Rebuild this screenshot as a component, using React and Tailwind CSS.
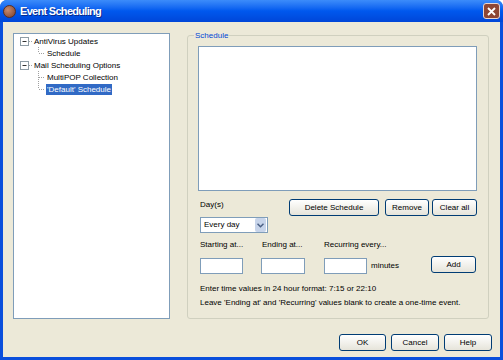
import React from 'react';

const font = { fontFamily: '"Liberation Sans", Arial, sans-serif' };

function XpButton({ children, className = '' }) {
    return (
        <div className={`flex items-center justify-center rounded-[3px] border border-[#003C74] bg-gradient-to-b from-white to-[#E6E4DA] text-black ${className}`}>
            {children}
        </div>
    );
}

function Connector({ type }) {
    // type: 'box' (expanded parent), 'mid' (├), 'end' (└)
    if (type === 'box') {
        return (
            <svg width="19" height="12" className="shrink-0">
                <rect x="6.5" y="2.5" width="8" height="8" fill="white" stroke="#8F9DA6" />
                <line x1="8.5" y1="6.5" x2="12.5" y2="6.5" stroke="#333" />
                <line x1="15" y1="6.5" x2="19" y2="6.5" stroke="#A0A0A0" strokeDasharray="1 1" />
            </svg>
        );
    }
    return (
        <svg width="32" height="12" className="shrink-0">
            <line x1="24.5" y1="0" x2="24.5" y2={type === 'end' ? 6 : 12} stroke="#A0A0A0" strokeDasharray="1 1" />
            <line x1="25" y1="6.5" x2="31" y2="6.5" stroke="#A0A0A0" strokeDasharray="1 1" />
        </svg>
    );
}

function TreeRow({ type, label, selected }) {
    return (
        <div className="flex h-[12px] items-center">
            <Connector type={type} />
            <span className={`px-[1px] leading-[11px] ${selected ? 'bg-[#316AC5] text-white' : 'text-black'}`}>{label}</span>
        </div>
    );
}

function TextBox({ className = '' }) {
    return <div className={`h-[16px] border border-[#7F9DB9] bg-white ${className}`} />;
}

export default function App() {
    return (
        <div className="flex h-[360px] w-[503px] flex-col overflow-hidden rounded-t-[7px] bg-[#0A4FDC] text-[8px]" style={font}>
            {/* Title bar */}
            <div className="flex h-[22px] shrink-0 items-center bg-gradient-to-b from-[#3C8CFA] via-[#0058EE] to-[#0046D8] pl-[3px] pr-[3px]">
                <div className="h-[13px] w-[13px] rounded-full border border-[#5A2E22] bg-[radial-gradient(circle_at_35%_35%,#C98B6E,#7A3F2C)]" />
                <span className="ml-[4px] text-[11px] font-bold tracking-[-0.7px] text-white [text-shadow:1px_1px_0_#0A2B8C]">Event Scheduling</span>
                <div className="ml-auto flex h-[16px] w-[17px] items-center justify-center rounded-[3px] border border-[#E8D6D0] bg-[#8E4634]">
                    <svg width="9" height="9" viewBox="0 0 9 9">
                        <path d="M1 1 L8 8 M8 1 L1 8" stroke="white" strokeWidth="1.8" />
                    </svg>
                </div>
            </div>

            {/* Client area */}
            <div className="mx-[3px] mb-[3px] flex flex-1 flex-col bg-[#ECE9D8]">
                <div className="flex items-start pt-[11px]">
                    {/* Tree */}
                    <div className="ml-[10px] h-[286px] w-[157px] border border-[#7F9DB9] bg-white pt-[1px]">
                        <TreeRow type="box" label="AntiVirus Updates" />
                        <TreeRow type="end" label="Schedule" />
                        <TreeRow type="box" label="Mail Scheduling Options" />
                        <TreeRow type="mid" label="MultiPOP Collection" />
                        <TreeRow type="end" label="'Default' Schedule" selected />
                    </div>

                    {/* Group box */}
                    <div className="relative ml-[17px] mt-[2px] h-[284px] w-[302px] rounded-[3px] border border-[#D0D0BF]">
                        <span className="absolute -top-[6px] left-[6px] bg-[#ECE9D8] px-[1px] leading-[11px] text-[#0046D5]">Schedule</span>
                        <div className="ml-[10px] mt-[10px] h-[145px] w-[279px] border border-[#7F9DB9] bg-white" />

                        <div className="mt-[8px] flex">
                            <div className="ml-[12px] flex flex-col">
                                <span className="leading-[12px]">Day(s)</span>
                                <div className="mt-[6px] flex h-[16px] w-[68px] items-center border border-[#7F9DB9] bg-white pl-[3px]">
                                    <span className="flex-1">Every day</span>
                                    <div className="mr-[1px] flex h-[14px] w-[11px] items-center justify-center rounded-[2px] bg-[#C7D4EA]">
                                        <svg width="7" height="5" viewBox="0 0 7 5">
                                            <path d="M0.5 0.8 L3.5 3.8 L6.5 0.8" fill="none" stroke="#4D6185" strokeWidth="1.5" />
                                        </svg>
                                    </div>
                                </div>
                            </div>
                            <div className="ml-[21px] flex h-[17px]">
                                <XpButton className="w-[90px]">Delete Schedule</XpButton>
                                <XpButton className="ml-[6px] w-[44px]">Remove</XpButton>
                                <XpButton className="ml-[3px] w-[45px]">Clear all</XpButton>
                            </div>
                        </div>

                        <div className="mt-[6px] flex leading-[12px]">
                            <span className="ml-[12px] w-[62px]">Starting at...</span>
                            <span className="w-[62px]">Ending at...</span>
                            <span>Recurring every...</span>
                        </div>

                        <div className="mt-[5px] flex h-[17px] items-start">
                            <TextBox className="ml-[12px] mt-[2px] w-[43px]" />
                            <TextBox className="ml-[18px] mt-[2px] w-[44px]" />
                            <TextBox className="ml-[19px] mt-[2px] w-[43px]" />
                            <span className="ml-[4px] mt-[4px] leading-[12px]">minutes</span>
                            <XpButton className="ml-auto mr-[12px] h-[17px] w-[45px]">Add</XpButton>
                        </div>

                        <div className="ml-[12px] mt-[10px] leading-[12px]">Enter time values in 24 hour format: 7:15 or 22:10</div>
                        <div className="ml-[12px] mt-[2px] leading-[12px]">Leave 'Ending at' and 'Recurring' values blank to create a one-time event.</div>
                    </div>
                </div>

                {/* Bottom buttons */}
                <div className="mt-[15px] flex justify-end pr-[8px]">
                    <XpButton className="h-[17px] w-[47px]">OK</XpButton>
                    <XpButton className="ml-[5px] h-[17px] w-[48px]">Cancel</XpButton>
                    <XpButton className="ml-[5px] h-[17px] w-[48px]">Help</XpButton>
                </div>
            </div>
        </div>
    );
}
